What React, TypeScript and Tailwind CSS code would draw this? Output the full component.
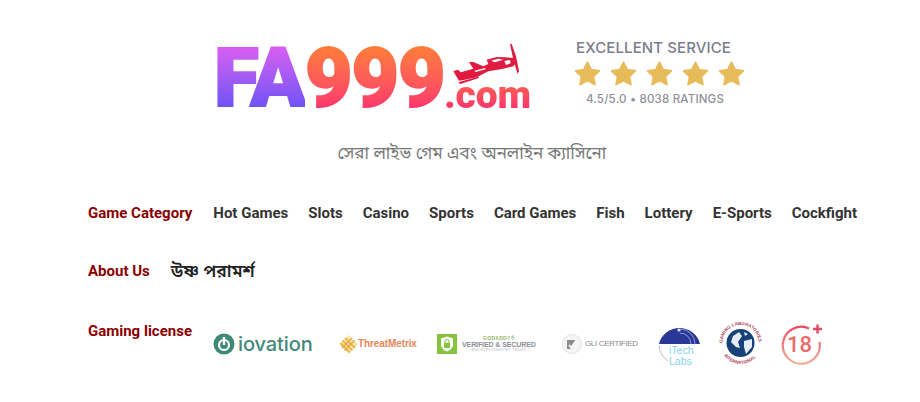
const Star = () => (
  <svg width="27" height="27" viewBox="0 0 29 27" className="shrink-0">
    <path d="M14.5 1.5 L18.4 9.4 L27.2 10.6 L20.8 16.7 L22.4 25.3 L14.5 21.2 L6.6 25.3 L8.2 16.7 L1.8 10.6 L10.6 9.4 Z" fill="#e8bb5a" stroke="#e8bb5a" strokeWidth="2" strokeLinejoin="round" />
  </svg>
);

const Plane = () => (
  <svg width="90" height="50" viewBox="0 0 270 150" className="absolute top-[2px] left-[231px]">
    <path d="M25 100 L38 95 L48 103 L85 92 L72 72 L85 72 L115 85 L130 78 L125 65 L155 57 L180 58 L205 60 L215 72 L205 85 L175 92 L130 100 L95 118 L60 125 L42 128 Z" fill="#e01b3f" />
    <path d="M138 68 L160 62 L175 65 L150 73 Z M178 69 L195 66 L197 76 L183 81 Z" fill="#fff" />
    <path d="M88 98 L120 90 L122 94 L92 102 Z" fill="#fff" />
    <path d="M195 18 L200 18 L213 55 L222 100 L218 108 L205 65 Z" fill="#e01b3f" />
    <path d="M40 133 L100 116 L102 120 L46 138 Z" fill="#e01b3f" />
  </svg>
);

const Iovation = () => (
  <div className="flex w-[100px] items-center gap-[3px]">
    <svg width="22" height="22" viewBox="0 0 22 22" className="shrink-0">
      <circle cx="11" cy="11" r="10.5" fill="#3f8a74" />
      <circle cx="11" cy="12" r="5" fill="none" stroke="#fff" strokeWidth="2.2" />
      <rect x="9.8" y="4" width="2.4" height="8" fill="#fff" />
    </svg>
    <span className="font-['Inter',sans-serif] text-[20px] leading-none font-medium tracking-[-0.1px] text-[#43897a]">iovation</span>
  </div>
);

const ThreatMetrix = () => (
  <div className="-ml-[2px] flex w-[79px] items-center">
    <svg width="21" height="21" viewBox="0 0 21 21" className="shrink-0">
      <path d="M10.5 1 L20 10.5 L10.5 20 L1 10.5 Z" fill="#fbe3a8" />
      <g stroke="#e9a43a" strokeWidth="1.3">
        <path d="M7 4 L17 14" />
        <path d="M4.500 6.500 L14.500 16.500" />
        <path d="M2.500 9 L12 18.500" />
        <path d="M14 4 L4 14" />
        <path d="M16.500 6.500 L6.500 16.500" />
      </g>
    </svg>
    <span className="-ml-[1px] font-['Liberation_Sans',sans-serif] text-[10px] leading-none font-bold tracking-[-0.1px] whitespace-nowrap text-[#e8875c]">ThreatMetrix</span>
  </div>
);

const GoDaddy = () => (
  <div className="flex w-[98px] items-center gap-[5px]">
    <div className="flex h-[20px] w-[20px] shrink-0 items-center justify-center bg-[#86c440]">
      <svg width="14" height="16" viewBox="0 0 14 16">
        <path d="M7 0.500 L13 2.500 V8 C13 12 10 14.500 7 15.500 C4 14.500 1 12 1 8 V2.500 Z" fill="#fff" />
        <rect x="4" y="7" width="6" height="5" fill="#86c440" />
        <path d="M5 7 V5.500 A2 2 0 0 1 9 5.500 V7" fill="none" stroke="#86c440" strokeWidth="1.1" />
      </svg>
    </div>
    <div className="flex flex-col items-center font-['Liberation_Sans',sans-serif] leading-none whitespace-nowrap">
      <span className="text-[5px] font-bold tracking-[0.3px] text-[#97b566]">GODADDY®</span>
      <span className="text-[7px] font-bold tracking-[-0.1px] text-[#8b9095]">VERIFIED &amp; SECURED</span>
      <span className="text-[4px] tracking-[0.1px] text-[#b8babd]">ENCRYPT IDENTIFY TRUST</span>
    </div>
  </div>
);

const Gli = () => (
  <div className="flex w-[75px] items-center gap-[3px]">
    <svg width="20" height="20" viewBox="0 0 20 20" className="shrink-0">
      <circle cx="10" cy="10" r="9.500" fill="#f4f4f4" stroke="#e2e2e2" />
      <path d="M5 6 H14.500 L8.500 15 H5 Z" fill="#8d8d8d" />
      <path d="M7 11 L9 13.500 L14.500 6" fill="none" stroke="#fff" strokeWidth="1.4" />
    </svg>
    <span className="font-['Liberation_Sans',sans-serif] text-[8px] leading-none tracking-[-0.35px] whitespace-nowrap text-[#8a8a8a]">GLI CERTIFIED</span>
  </div>
);

const ITech = () => (
  <div className="relative h-[43px] w-[43px]">
    <svg width="43" height="43" viewBox="0 0 43 43">
      <path d="M1 21 A21 20.500 0 0 1 42 21 H1 Z" fill="#2b3796" />
      <path d="M22 6 A15 15 0 0 1 37 21 M22 10 A11 11 0 0 1 33 21" fill="none" stroke="#aab4e8" strokeWidth="0.8" />
      <circle cx="21" cy="7" r="1.600" fill="#e5e9ff" />
      <path d="M1 22 A21 20.500 0 0 0 10 38" fill="none" stroke="#b7bcc6" strokeWidth="1" />
    </svg>
    <div className="absolute top-[22px] left-[11px] font-['Liberation_Sans',sans-serif] text-[10.500px] leading-[11px] text-[#86d3ea]">
      <div>iTech</div>
      <div>Labs</div>
    </div>
  </div>
);

const Gaming = () => (
  <svg width="45" height="44" viewBox="0 0 45 44">
    <circle cx="22.500" cy="21" r="14" fill="#174178" />
    <path d="M15 14 L21 10 L24 14 L20 20 L22 26 L18 25 L13 20 Z M26 19 L34 17 L34 25 L28 32 L26 25 Z M26 10 L30 12 L27 14 Z" fill="#e5ecf4" />
    <defs>
      <path id="glTop" d="M5.600 27 A18 18 0 1 1 39.400 27" />
      <path id="glBot" d="M3.900 30 A20.500 20.500 0 0 0 41.100 30" />
    </defs>
    <text fontSize="4.500" fontWeight="700" fill="#b0405a" fontFamily="'Liberation Sans', sans-serif">
      <textPath href="#glTop" startOffset="6">GAMING LABORATORIES</textPath>
    </text>
    <text fontSize="4.500" fontWeight="700" fill="#b0405a" fontFamily="'Liberation Sans', sans-serif">
      <textPath href="#glBot" startOffset="4">INTERNATIONAL</textPath>
    </text>
  </svg>
);

const Age = () => (
  <div className="relative h-[42px] w-[42px]">
    <svg width="42" height="42" viewBox="0 0 42 42">
      <defs>
        <linearGradient id="ageG" x1="0" y1="0" x2="0" y2="1">
          <stop offset="0" stopColor="#ea4a5e" />
          <stop offset="1" stopColor="#f3b09c" />
        </linearGradient>
      </defs>
      <path d="M28 5.500 A18.500 18.500 0 1 0 38.500 19" fill="none" stroke="url(#ageG)" strokeWidth="2.200" />
      <path d="M32 6 H41 M36.500 1.500 V10.500" stroke="#ea4a5e" strokeWidth="2.400" />
    </svg>
    <span className="absolute top-[11px] left-[6px] font-['Roboto',sans-serif] text-[22px] leading-none font-medium text-[#ec6a6c]">18</span>
  </div>
);

export default function App() {
  const games = ["Hot Games", "Slots", "Casino", "Sports", "Card Games", "Fish", "Lottery", "E-Sports", "Cockfight"];
  return (
    <div className="h-[402px] w-[920px] overflow-hidden bg-white pt-[36px] font-['Roboto',sans-serif]">
      <div className="flex h-[80px] items-start pl-[214px]">
        <div className="relative h-[80px] w-[320px] font-['Roboto',sans-serif] font-black">
          <div className="flex pt-[2px] text-[82px] leading-[80px] tracking-[-1px] [-webkit-text-stroke:2px_transparent]">
            <span className="bg-gradient-to-b from-[#e85cf0] to-[#5a4df5] bg-clip-text text-transparent">FA</span>
            <span className="bg-gradient-to-b from-[#ff8428] to-[#fb2070] bg-clip-text text-transparent">999</span>
          </div>
          <span className="absolute top-[39px] left-[230px] bg-gradient-to-b from-[#ff6a45] to-[#fb2070] bg-clip-text text-[39px] leading-[40px] font-black tracking-[-0.2px] text-transparent">.com</span>
          <Plane />
        </div>
        <div className="ml-[40px] flex w-[171px] flex-col items-center pt-[5px] font-['Inter',sans-serif]">
          <div className="mr-[12px] text-[15px] leading-[14px] font-medium tracking-[0.1px] whitespace-nowrap text-[#7b7d8d]">EXCELLENT SERVICE</div>
          <div className="mt-[5px] flex gap-[9px]">
            <Star /><Star /><Star /><Star /><Star />
          </div>
          <div className="mt-[6px] mr-[9px] text-[11.500px] leading-[12px] font-medium tracking-[0.2px] whitespace-nowrap text-[#8f909c]">4.5/5.0 • 8038 RATINGS</div>
        </div>
      </div>

      <p className="mt-[27px] pl-[24px] text-center font-['Noto_Sans_Bengali','Noto_Sans','Liberation_Sans',sans-serif] text-[17px] leading-[24px] text-[#777]">সেরা লাইভ গেম এবং অনলাইন ক্যাসিনো</p>

      <div className="mt-[36px] flex items-center pl-[88px] text-[15px] leading-[20px] font-bold text-[#333]">
        <span className="mr-[21px] text-[#8b0000]">Game Category</span>
        <div className="flex gap-[20px]">
          {games.map((g) => (<span key={g}>{g}</span>))}
        </div>
      </div>

      <div className="mt-[38px] flex h-[20px] items-center pl-[88px] text-[15px] leading-[20px] font-bold text-[#333]">
        <span className="mr-[21px] text-[#8b0000]">About Us</span>
        <span className="mt-[3px] font-['Noto_Sans_Bengali','Noto_Sans',sans-serif] text-[17.500px] font-semibold text-[#222]">উষ্ণ পরামর্শ</span>
      </div>

      <div className="mt-[40px] flex items-start pl-[88px]">
        <span className="mr-[21px] text-[15px] leading-[20px] font-bold text-[#8b0000]">Gaming license</span>
        <div className="flex items-center pt-[1px]">
          <Iovation />
          <div className="ml-[27px]"><ThreatMetrix /></div>
          <div className="ml-[20px]"><GoDaddy /></div>
          <div className="ml-[27px]"><Gli /></div>
          <div className="ml-[21px]"><ITech /></div>
          <div className="ml-[17px]"><Gaming /></div>
          <div className="ml-[18px]"><Age /></div>
        </div>
      </div>
    </div>
  );
}
